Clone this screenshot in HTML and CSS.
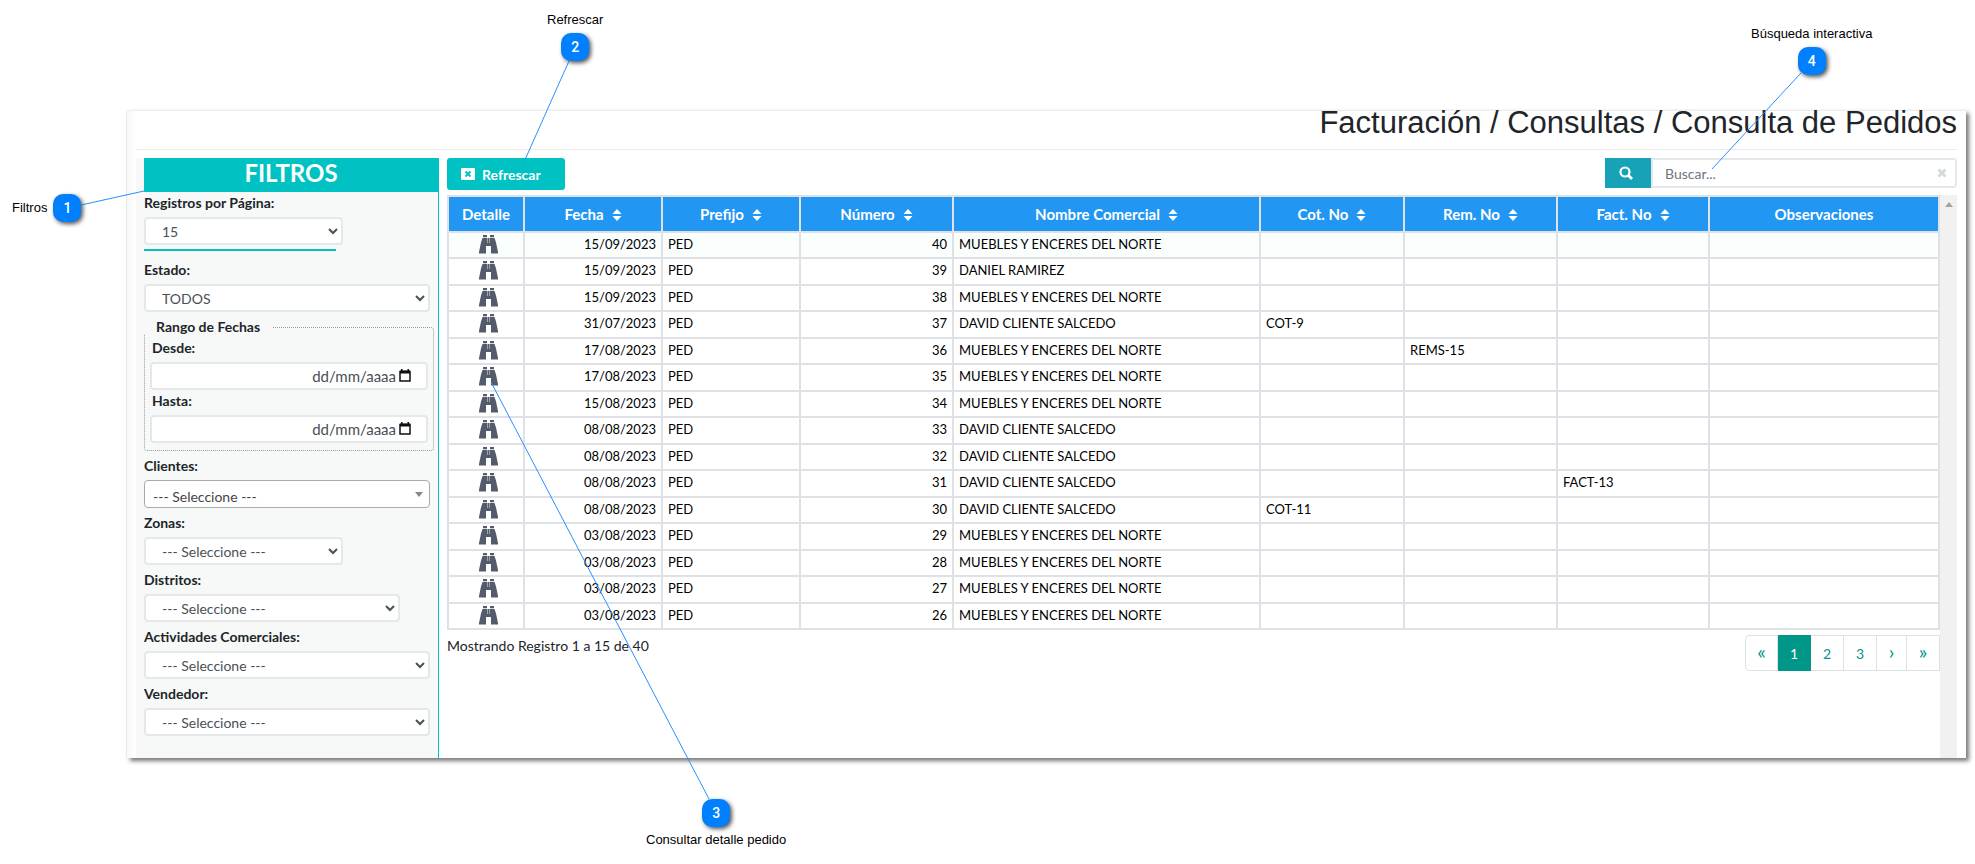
FILE: index.html
```html
<!DOCTYPE html>
<html lang="es">
<head>
<meta charset="utf-8">
<title>Consulta de Pedidos</title>
<link rel="stylesheet" href="styles.css">
</head>
<body>
<svg class="defs" aria-hidden="true">
  <symbol id="binoculars" viewBox="0 0 19 19">
    <path d="M4 0h4v2.200H4zM11 0h4v2.200h-4zM3.500 3h5v5h2V3h5l1.500 4.500L19 17v1.500h-7V11H7v7.500H0V17L2 7.500z"/>
    <path d="M8.900 3h1.200v6H8.900z"/>
  </symbol>
  <symbol id="sort" viewBox="0 0 10 14"><path d="M5 1l4.500 5h-9zM.5 8h9L5 13z" stroke-linejoin="round"/></symbol>
</svg>
<div class="stage">
  <main class="panel">
    <header class="panel-head"><h1>Facturación / Consultas / Consulta de Pedidos</h1></header>
    <div class="columns">
      <form class="filters">
        <h2>FILTROS</h2>
        <div class="fields">
          <label class="first" for="reg">Registros por Página:</label>
          <select id="reg" class="w-short"><option>15</option></select>
          <div class="accent"></div>
          <label for="estado">Estado:</label>
          <select id="estado"><option>TODOS</option></select>
          <fieldset>
            <legend>Rango de Fechas</legend>
            <label for="desde">Desde:</label>
            <div class="date"><input id="desde" type="text" placeholder="dd/mm/aaaa"><svg viewBox="0 0 12 13"><path d="M1 2.500h10v9.500H1z" fill="none" stroke="#111" stroke-width="1.500"/><path d="M1 1.500h10v3H1zM2 0h1.500v2H2zM8.500 0H10v2H8.500z" fill="#111"/></svg></div>
            <label for="hasta">Hasta:</label>
            <div class="date"><input id="hasta" type="text" placeholder="dd/mm/aaaa"><svg viewBox="0 0 12 13"><path d="M1 2.500h10v9.500H1z" fill="none" stroke="#111" stroke-width="1.500"/><path d="M1 1.500h10v3H1zM2 0h1.500v2H2zM8.500 0H10v2H8.500z" fill="#111"/></svg></div>
          </fieldset>
          <label for="clientes">Clientes:</label>
          <div class="combo"><select id="clientes"><option>--- Seleccione ---</option></select></div>
          <label for="zonas">Zonas:</label>
          <select id="zonas" class="w-short"><option>--- Seleccione ---</option></select>
          <label for="distritos">Distritos:</label>
          <select id="distritos" class="w-mid"><option>--- Seleccione ---</option></select>
          <label for="act">Actividades Comerciales:</label>
          <select id="act"><option>--- Seleccione ---</option></select>
          <label for="vend">Vendedor:</label>
          <select id="vend"><option>--- Seleccione ---</option></select>
        </div>
      </form>
      <section class="results">
        <div class="toolbar">
          <button class="refresh" type="button"><svg viewBox="0 0 14 12"><path fill="#fff" d="M1 0h12q1 0 1 1v10q0 1-1 1H1q-1 0-1-1V1q0-1 1-1z"/><path d="M4.500 3.500l5 5m0-5l-5 5" stroke="#00c2c3" stroke-width="2"/></svg>Refrescar</button>
          <div class="search">
            <button type="button" aria-label="Buscar"><svg viewBox="0 0 14 14" fill="none" stroke="#fff"><circle cx="6" cy="6" r="4.500" stroke-width="2.200"/><path d="M9.500 9.500l3.500 3.500" stroke-width="2.800"/></svg></button>
            <div class="search-box"><input type="text" placeholder="Buscar..." aria-label="Texto a buscar"><svg viewBox="0 0 10 10"><path d="M1.500 1.500l7 7m0-7l-7 7" stroke="#d3dbda" stroke-width="3"/></svg></div>
          </div>
        </div>
        <div class="scroller">
          <div class="content">
            <table>
              <colgroup><col class="c1"><col class="c2"><col class="c2"><col class="c3"><col class="c4"><col class="c5"><col class="c3"><col class="c6"><col></colgroup>
              <thead><tr id="head"></tr></thead>
              <tbody id="rows"></tbody>
            </table>
            <div class="table-foot">
              <p>Mostrando Registro 1 a 15 de 40</p>
              <nav class="pages" aria-label="Paginación"><a href="#" class="arrow">«</a><a href="#" class="on">1</a><a href="#">2</a><a href="#">3</a><a href="#" class="arrow next">›</a><a href="#" class="arrow">»</a></nav>
            </div>
          </div>
          <div class="bar" aria-hidden="true"><i></i></div>
        </div>
      </section>
    </div>
  </main>

  <svg class="leaders" aria-hidden="true">
    <path d="M81 205L144 191M569 61L524 162M709 799L491 382M1801 73L1712 169"/>
  </svg>
  <div class="note n1"><span>Filtros</span><b>1</b></div>
  <div class="note n2"><span>Refrescar</span><b>2</b></div>
  <div class="note n3"><b>3</b><span>Consultar detalle pedido</span></div>
  <div class="note n4"><span>Búsqueda interactiva</span><b>4</b></div>
</div>
<script src="app.js"></script>
</body>
</html>
```
FILE: styles.css
```css
* { box-sizing: border-box; }
body { margin: 0; background: #fff; color: #212529; font: 14px/21px Lato, sans-serif; }
.defs { display: none; }
.stage { position: relative; min-height: 864px; padding: 110px 9px 0 127px; }

.panel {
  padding: 0 9px;
  background: linear-gradient(90deg, #f8f8f8, #fff 9px);
  border-top: 1px solid #ececec;
  border-top-left-radius: 4px;
  box-shadow: 3px 3px 4px #777, -1px 0 1px #eee;
}
.panel-head { height: 39px; border-bottom: 1px solid #ececec; }
h1 { margin: 0; font: 400 31px/24px "Liberation Sans", Arial, sans-serif; text-align: right; }
.columns { display: flex; gap: 8px; padding-top: 8px; }

.filters { width: 303px; flex: none; padding: 0 0 22px 8px; background: #f7f9f9; border-right: 1px solid #00c2c3; }
h2 { margin: 0; padding-bottom: 4px; background: #00c2c3; color: #fff; font-size: 24px; line-height: 30px; text-align: center; }
.fields { padding-right: 8px; }
label { display: block; width: max-content; margin: 4px 0; font-weight: 700; }
label.first { margin-top: 0; }
select, input {
  display: block; width: 100%; height: 28px; margin: 0; padding: 0 12px;
  border: 2px solid #e5e8e8; border-radius: 4px; background: #fff;
  color: #495057; font: 14px/21px Lato, sans-serif;
}
select { padding: 1px 0 0 12px; }
.w-short { width: 199px; }
.w-mid { width: 256px; }
.accent { width: 192px; height: 2px; margin: 4px 0 8px; background: #00c2c3; }
fieldset { margin: 8px -4px 0 0; padding: 0 5px 7px; border: 1px dotted #999; border-radius: 3px; }
legend { margin-left: -6px; padding: 0 12px; font-weight: 700; line-height: 14px; }
fieldset label { margin: 3px 2px 4px; }
fieldset .date + label { margin: 0 2px 4px; }
.date { position: relative; }
.date input { padding: 0 30px 0 12px; font-size: 15px; text-align: right; }
.date svg { position: absolute; right: 17px; top: 7px; width: 12px; height: 13px; }
input::placeholder { color: #6c757d; opacity: 1; }
.date input::placeholder { color: #495057; }
.combo { position: relative; }
.combo select { appearance: none; padding: 4px 8px 0; border: 1px solid #aaa; color: #444; }
.combo::after { content: ""; position: absolute; right: 7px; top: 12px; border: 4px solid transparent; border-top: 5px solid #888; border-bottom: 0; }

.results { flex: 1; min-width: 0; display: flex; flex-direction: column; }
.toolbar { display: flex; justify-content: space-between; height: 37px; }
.refresh { display: flex; align-items: center; gap: 7px; width: 118px; height: 32px; padding: 0 0 0 14px; border: 0; border-radius: 3px; background: #00c2c3; color: #fff; font: 700 14px/21px Lato, sans-serif; }
.refresh svg { width: 14px; height: 12px; }
.search { display: flex; width: 352px; height: 30px; }
.search button { width: 46px; border: 0; padding: 2px 4px 0 0; background: #17a2b8; }
.search button svg { width: 14px; height: 14px; }
.search-box { position: relative; flex: 1; }
.search-box input { height: 30px; padding-top: 1px; border-radius: 0 4px 4px 0; }
.search-box svg { position: absolute; right: 10px; top: 10px; width: 10px; height: 10px; }

.scroller { flex: 1; display: flex; }
.content { flex: 1; min-width: 0; }
.bar { width: 17px; background: #f1f1f1; }
.bar i { display: block; margin: 7px auto 0; width: 8px; border: 4px solid transparent; border-bottom: 5px solid #a3a3a3; border-top: 0; }
table { width: 100%; table-layout: fixed; border-collapse: collapse; color: #000; font-size: 13px; line-height: 19px; }
.c1 { width: 76px; } .c2 { width: 138px; } .c3 { width: 153px; } .c4 { width: 307px; } .c5 { width: 144px; } .c6 { width: 152px; }
th, td { border: 2px solid #dee2e6; }
th { height: 36px; padding: 0; background: #2196f3; color: #fff; font-size: 15px; }
th svg { width: 10px; height: 14px; margin-left: 8px; vertical-align: -2px; fill: #fff; }
td { height: 26px; padding: 0 5px 2px; white-space: nowrap; }
tr:nth-child(even) td { height: 27px; }
tbody tr:first-child { background: #fafffe; }
.num { text-align: right; }
td.ico { padding: 0 5px 2px 9px; }
.ico svg { display: block; width: 19px; height: 19px; margin: 0 auto; fill: #545b6b; }
.table-foot { display: flex; justify-content: space-between; padding-top: 5px; }
.table-foot p { margin: 0; }
.pages { display: flex; }
.pages a { width: 33px; height: 36px; border: 1px solid #dee2e6; border-left-width: 0; color: #009688; line-height: 36px; text-align: center; text-decoration: none; }
.pages a:first-child { border-left-width: 1px; border-radius: 4px 0 0 4px; }
.pages .arrow { font-size: 20px; line-height: 31px; }
.pages .next { width: 30px; }
.pages .on { background: #009688; border-color: #009688; color: #fff; }

.leaders { position: absolute; left: 0; top: 0; width: 100%; height: 100%; pointer-events: none; fill: none; stroke: #2a8fff; stroke-width: 1; }
.note { position: absolute; display: flex; align-items: center; color: #000; font: 13px/14px "Liberation Sans", Arial, sans-serif; white-space: nowrap; }
.note b { width: 28px; height: 28px; border-radius: 10px; background: #0080ff; color: #fff; font: 500 14px/28px Roboto, sans-serif; text-align: center; box-shadow: 2px 2px 4px #555; }
.n1 { left: 12px; top: 194px; gap: 6px; }
.n2, .n3, .n4 { flex-direction: column; gap: 6px; }
.n2 { left: 547px; top: 13px; }
.n3 { left: 646px; top: 799px; }
.n4 { left: 1751px; top: 27px; }
```
FILE: app.js
```js
const heads = ["Detalle", "Fecha", "Prefijo", "Número", "Nombre Comercial", "Cot. No", "Rem. No", "Fact. No", "Observaciones"];
const M = "MUEBLES Y ENCERES DEL NORTE", D = "DAVID CLIENTE SALCEDO";
const data = [
  ["15/09/2023", 40, M], ["15/09/2023", 39, "DANIEL RAMIREZ"], ["15/09/2023", 38, M],
  ["31/07/2023", 37, D, "COT-9"], ["17/08/2023", 36, M, "", "REMS-15"], ["17/08/2023", 35, M],
  ["15/08/2023", 34, M], ["08/08/2023", 33, D], ["08/08/2023", 32, D],
  ["08/08/2023", 31, D, "", "", "FACT-13"], ["08/08/2023", 30, D, "COT-11"], ["03/08/2023", 29, M],
  ["03/08/2023", 28, M], ["03/08/2023", 27, M], ["03/08/2023", 26, M]
];
document.getElementById("head").innerHTML = heads.map((h, i) =>
  `<th>${h}${i > 0 && i < 8 ? '<svg><use href="#sort"/></svg>' : ""}</th>`).join("");
document.getElementById("rows").innerHTML = data.map(([f, n, c, cot = "", rem = "", fac = ""]) =>
  `<tr><td class="ico"><svg><use href="#binoculars"/></svg></td><td class="num">${f}</td><td>PED</td><td class="num">${n}</td><td>${c}</td><td>${cot}</td><td>${rem}</td><td>${fac}</td><td></td></tr>`).join("");
```
